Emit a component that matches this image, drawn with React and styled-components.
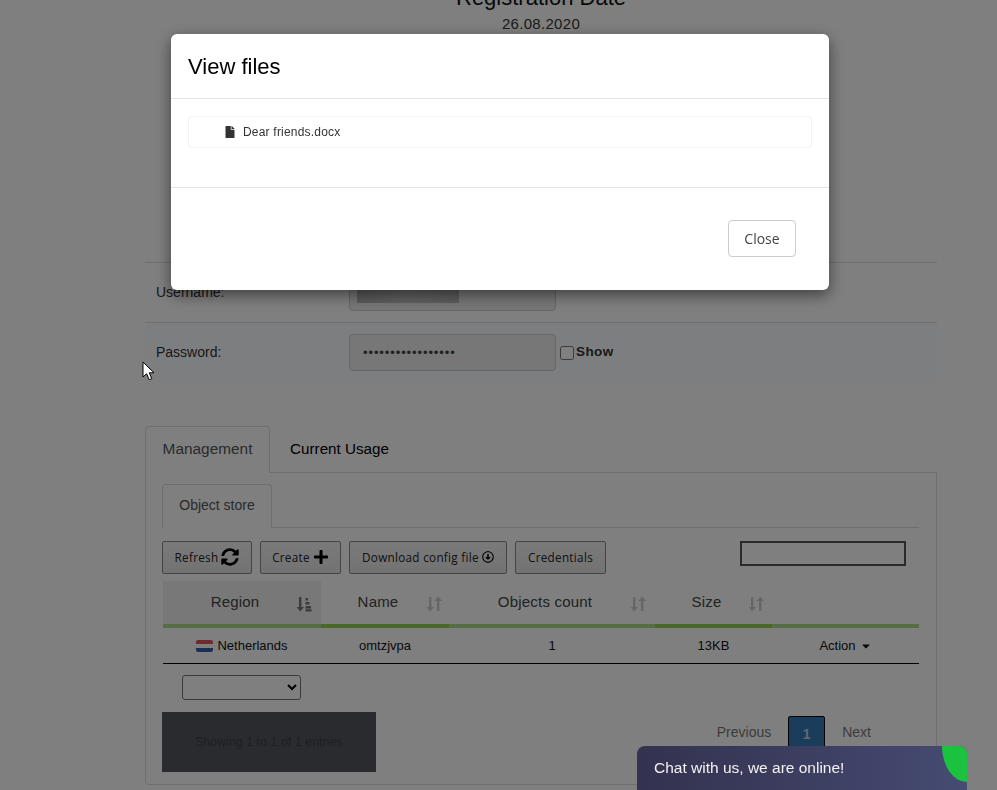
import styled, { createGlobalStyle } from "styled-components";
import { FaFile, FaPlus, FaSyncAlt, FaCaretDown, FaRegArrowAltCircleDown } from "react-icons/fa";

const GlobalStyle = createGlobalStyle`
  html, body {
    margin: 0;
    padding: 0;
    height: 100%;
    overflow: hidden;
    background: #fff;
  }
  * { box-sizing: border-box; }
`;

const Page = styled.div`
  height: 790px;
  overflow: hidden;
  padding: 0 60px 0 145px;
  font-family: "Liberation Sans", Arial, sans-serif;
  color: #333;
`;

const Heading = styled.div`
  margin: -14px 0 0;
  text-align: center;
  height: 277px;
  border-bottom: 1px solid #ddd;
`;

const Title = styled.div`
  font-size: 22px;
  line-height: 24px;
  color: #111;
`;

const DateText = styled.div`
  font-size: 15px;
  letter-spacing: 0.3px;
  line-height: 20px;
  margin-top: 4px;
`;

const Row = styled.div`
  display: flex;
  align-items: center;
  height: ${(p) => (p.$last ? "59px" : "60px")};
  padding-left: 11px;
  border-bottom: ${(p) => (p.$last ? "none" : "1px solid #ddd")};
  background: ${(p) => (p.$tint ? "#fbfcff" : "#fff")};
`;

const Label = styled.div`
  width: 193px;
  padding-bottom: 2px;
  font-size: 14px;
`;

const FakeInput = styled.div`
  position: relative;
  width: 207px;
  height: 37px;
  border: 1px solid #ccc;
  border-radius: 4px;
  background: #eee;
  display: flex;
  align-items: center;
  padding-left: 13px;
  font-size: 13px;
  letter-spacing: 0.9px;
  color: #444;
`;

const Blur = styled.div`
  position: absolute;
  left: 7px;
  top: 15px;
  width: 102px;
  height: 13px;
  background: linear-gradient(90deg, #b4b4b4, #c4c4c4 50%, #bbb);
`;

const ShowCheck = styled.input`
  margin: 0 2px 0 4px;
  width: 14px;
  height: 14px;
`;

const ShowText = styled.span`
  font-size: 13.5px;
  font-weight: 700;
  letter-spacing: 0.4px;
  position: relative;
  top: -1px;
`;

const MainTabs = styled.div`
  display: flex;
  margin-top: 44px;
  height: 47px;
  border-bottom: 1px solid #ddd;
`;

const Tab = styled.div`
  display: flex;
  align-items: center;
  justify-content: center;
  width: ${(p) => p.$width}px;
  height: ${(p) => (p.$active ? "calc(100% + 1px)" : "100%")};
  padding-bottom: ${(p) => p.$lift}px;
  font-size: ${(p) => p.$size}px;
  color: ${(p) => (p.$active ? "#555" : "#000")};
  background: #fff;
  border: ${(p) => (p.$active ? "1px solid #ddd" : "none")};
  border-bottom: none;
  border-radius: 4px 4px 0 0;
`;

const Panel = styled.div`
  height: 312px;
  border: 1px solid #ddd;
  border-top: none;
  border-radius: 0 0 4px 4px;
  padding: 11px 17px 0 16px;
`;

const SubTabs = styled.div`
  display: flex;
  height: 44px;
  border-bottom: 1px solid #ddd;
`;

const Toolbar = styled.div`
  display: flex;
  align-items: flex-start;
  gap: 8px;
  margin-top: 13px;
`;

const ToolButton = styled.div`
  display: flex;
  align-items: center;
  justify-content: center;
  gap: 3px;
  width: ${(p) => p.$width}px;
  height: 33px;
  padding-bottom: 2px;
  border: 1px solid #888;
  border-radius: 2px;
  background: linear-gradient(#f4f4f4, #e6e6e6);
  font-family: "Open Sans", sans-serif;
  font-size: 11.7px;
  letter-spacing: 0.3px;
  color: #222;
`;

const Search = styled.input`
  width: 166px;
  height: 25px;
  margin-left: auto;
  margin-right: 13px;
  border: 2px solid #555;
  background: #fff;
`;

const Grid = styled.div`
  display: grid;
  grid-template-columns: 158px 128px 206px 117px 147px;
  width: 756px;
  margin-left: 1px;
`;

const HeadCell = styled.div`
  display: flex;
  align-items: center;
  justify-content: center;
  position: relative;
  height: 47px;
  padding: 1px 14px 3px 0;
  margin-top: 7px;
  font-size: 15px;
  letter-spacing: 0.2px;
  color: #444;
  background: ${(p) => (p.$sorted ? "#f0f0f0" : "#fff")};
  border-bottom: 4px solid ${(p) => (p.$dark ? "#90d44c" : "#aedc8a")};
`;

const SortIcon = styled.svg`
  position: absolute;
  right: ${(p) => p.$right}px;
  top: 15px;
  width: 16px;
  height: 16px;
  color: ${(p) => (p.$on ? "#777" : "#ccc")};
`;

const Cell = styled.div`
  display: flex;
  align-items: center;
  justify-content: center;
  gap: 4px;
  height: 36px;
  font-size: 13px;
  color: #111;
  border-bottom: 1px solid #000;
`;

const Flag = styled.svg`
  width: 17px;
  height: 12px;
  border-radius: 2px;
`;

const PageSelect = styled.select`
  display: block;
  width: 119px;
  height: 25px;
  margin: 11px 0 0 20px;
  background: #fff;
  border: 1px solid #767676;
  border-radius: 3px;
`;

const Bottom = styled.div`
  display: flex;
  justify-content: space-between;
  margin-top: 12px;
  padding-right: 48px;
`;

const Info = styled.div`
  display: flex;
  align-items: center;
  justify-content: center;
  width: 214px;
  height: 60px;
  background: #54565f;
  font-size: 12px;
  letter-spacing: 0.2px;
  color: #3c3d44;
`;

const Pager = styled.div`
  display: flex;
  align-items: flex-start;
  padding-top: 4px;
  gap: 17px;
  font-size: 14px;
  color: #777;
`;

const PagerText = styled.div`
  line-height: 33px;
`;

const Current = styled.div`
  width: 37px;
  height: 36px;
  display: flex;
  align-items: center;
  justify-content: center;
  background: #337ab7;
  border: 1px solid #000;
  border-radius: 2px;
  color: #c0d4e0;
  font-weight: 700;
`;

const Backdrop = styled.div`
  position: fixed;
  inset: 0;
  background: rgba(0, 0, 0, 0.5);
  display: flex;
  justify-content: center;
  align-items: flex-start;
  padding: 34px 0 0 3px;
  font-family: "Liberation Sans", Arial, sans-serif;
`;

const Modal = styled.div`
  width: 658px;
  background: #fff;
  border-radius: 6px;
  box-shadow: 0 5px 15px rgba(0, 0, 0, 0.5);
`;

const ModalHeader = styled.div`
  height: 65px;
  display: flex;
  align-items: center;
  padding: 2px 0 0 17px;
  font-size: 22px;
  color: #000;
  border-bottom: 1px solid #e5e5e5;
`;

const ModalBody = styled.div`
  height: 89px;
  padding: 17px 17px 0;
  border-bottom: 1px solid #e5e5e5;
`;

const FileRow = styled.div`
  height: 32px;
  display: flex;
  align-items: center;
  gap: 7px;
  padding-left: 35px;
  border: 1px solid #f3f3f3;
  border-radius: 4px;
  font-size: 12px;
  letter-spacing: 0.2px;
  color: #333;
`;

const ModalFooter = styled.div`
  height: 102px;
  display: flex;
  justify-content: flex-end;
  padding: 32px 33px 0 0;
`;

const CloseButton = styled.button`
  width: 68px;
  height: 37px;
  background: #fff;
  border: 1px solid #ccc;
  border-radius: 4px;
  font-family: "Open Sans", sans-serif;
  font-size: 14px;
  color: #444;
`;

const Chat = styled.div`
  position: fixed;
  left: 637px;
  bottom: 0;
  width: 330px;
  height: 44px;
  overflow: hidden;
  border-radius: 8px 8px 0 0;
  background: linear-gradient(90deg, #33324f, #464b72);
  color: #f2f2f2;
  font-family: "Liberation Sans", Arial, sans-serif;
  font-size: 15.5px;
  padding: 13px 0 0 17px;
`;

const ChatDot = styled.div`
  position: absolute;
  right: 0;
  top: 0;
  width: 25px;
  height: 36px;
  background: #1bc23f;
  border-radius: 0 0 0 100% / 0 0 0 100%;
`;

const Cursor = styled.svg`
  position: fixed;
  left: 142px;
  top: 361px;
  width: 13px;
  height: 20px;
`;

const SortBars = ({ right, on }) => (
  <SortIcon $right={right} $on={on} viewBox="0 0 16 16" fill="currentColor">
    <path d="M3 1h2.400v10H8l-3.800 4.500L.6 11H3z" />
    {on ? (
      <path d="M9.500 2h2.500v2.500H9.500zM9.500 6h4v2.500h-4zM9.500 10h5.500v2.500H9.500zM9.500 13.200H15.500V15.500H9.500z" />
    ) : (
      <path d="M12 15h2.400V5H17l-3.800-4.500L9.400 5H12z" transform="translate(-1)" />
    )}
  </SortIcon>
);

const App = () => {
  return (
    <>
      <GlobalStyle />
      <Page>
        <Heading>
          <Title>Registration Date</Title>
          <DateText>26.08.2020</DateText>
        </Heading>
        <Row>
          <Label>Username:</Label>
          <FakeInput>
            <Blur />
          </FakeInput>
        </Row>
        <Row $tint $last>
          <Label>Password:</Label>
          <FakeInput>•••••••••••••••••</FakeInput>
          <ShowCheck type="checkbox" />
          <ShowText>Show</ShowText>
        </Row>
        <MainTabs>
          <Tab $active $width={125} $size={15.4} $lift={2}>Management</Tab>
          <Tab $width={139} $size={15.2} $lift={2}>Current Usage</Tab>
        </MainTabs>
        <Panel>
          <SubTabs>
            <Tab $active $width={110} $size={14} $lift={4}>Object store</Tab>
          </SubTabs>
          <Toolbar>
            <ToolButton $width={90}>Refresh <FaSyncAlt size={18} color="#000" /></ToolButton>
            <ToolButton $width={81}>Create <FaPlus size={16} color="#000" /></ToolButton>
            <ToolButton $width={158}>Download config file <FaRegArrowAltCircleDown size={12} color="#000" /></ToolButton>
            <ToolButton $width={91}>Credentials</ToolButton>
            <Search />
          </Toolbar>
          <Grid>
            <HeadCell $sorted>Region<SortBars right={9} on /></HeadCell>
            <HeadCell $dark>Name<SortBars right={7} /></HeadCell>
            <HeadCell>Objects count<SortBars right={9} /></HeadCell>
            <HeadCell $dark>Size<SortBars right={8} /></HeadCell>
            <HeadCell />
            <Cell>
              <Flag viewBox="0 0 3 3" preserveAspectRatio="none">
                <rect width="3" height="1" fill="#e0555c" />
                <rect y="1" width="3" height="1" fill="#fff" />
                <rect y="2" width="3" height="1" fill="#3d5eae" />
              </Flag>
              Netherlands
            </Cell>
            <Cell>omtzjvpa</Cell>
            <Cell>1</Cell>
            <Cell>13KB</Cell>
            <Cell>Action <FaCaretDown size={12} /></Cell>
          </Grid>
          <PageSelect />
          <Bottom>
            <Info>Showing 1 to 1 of 1 entries</Info>
            <Pager>
              <PagerText>Previous</PagerText>
              <Current>1</Current>
              <PagerText>Next</PagerText>
            </Pager>
          </Bottom>
        </Panel>
      </Page>
      <Backdrop>
        <Modal>
          <ModalHeader>View files</ModalHeader>
          <ModalBody>
            <FileRow>
              <FaFile size={12} color="#333" />
              Dear friends.docx
            </FileRow>
          </ModalBody>
          <ModalFooter>
            <CloseButton>Close</CloseButton>
          </ModalFooter>
        </Modal>
      </Backdrop>
      <Chat>
        Chat with us, we are online!
        <ChatDot />
      </Chat>
      <Cursor viewBox="0 0 13 20">
        <path d="M1 1v15l3.600-3.300 2.600 6 2.600-1.100-2.600-5.800H12z" fill="#fff" stroke="#000" strokeWidth="1" />
      </Cursor>
    </>
  );
};

export default App;
